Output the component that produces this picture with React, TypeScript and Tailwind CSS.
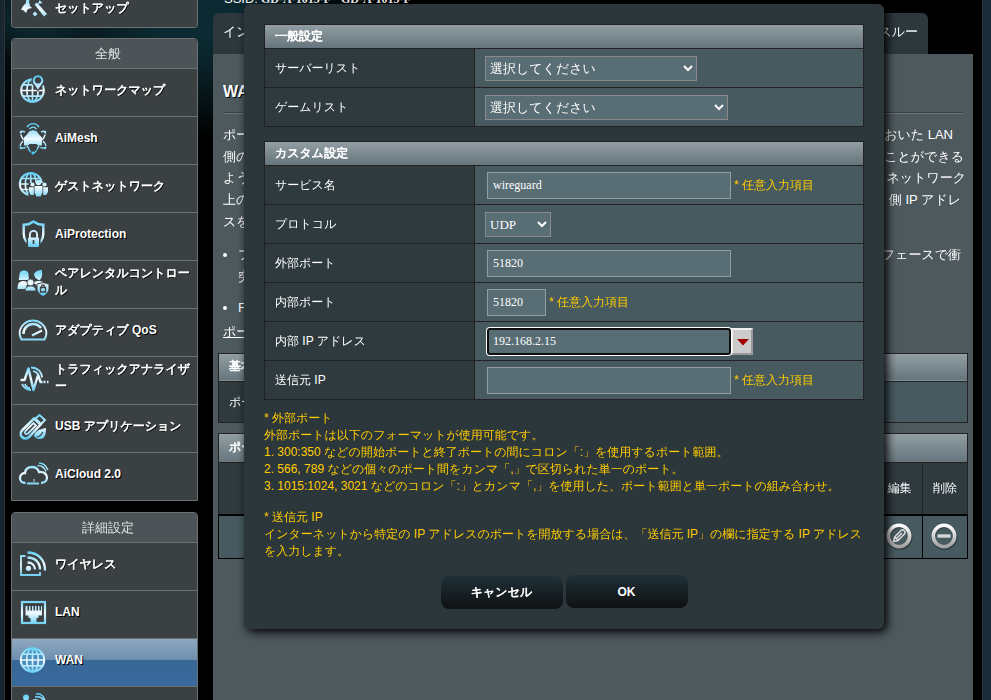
import React from "react";

const sans = "font-['Liberation_Sans','WenQuanYi_Zen_Hei','Noto_Sans_CJK_JP',sans-serif]";
const serif = "font-['Liberation_Serif','WenQuanYi_Zen_Hei','Noto_Sans_CJK_JP',serif]";

const G = "url(#ice)";

function Globe({ cx, cy, r }: { cx: number; cy: number; r: number }) {
  return (
    <g fill="none" stroke={G} strokeWidth="1.7">
      <circle cx={cx} cy={cy} r={r} strokeWidth="2" />
      <ellipse cx={cx} cy={cy} rx={r * 0.5} ry={r} />
      <path d={`M${cx} ${cy - r}V${cy + r + 0.01}h.01M${cx - r} ${cy}H${cx + r}v.01M${cx - r * 0.85} ${cy - r * 0.5}H${cx + r * 0.85}v.01M${cx - r * 0.85} ${cy + r * 0.5}H${cx + r * 0.85}v.01`} />
    </g>
  );
}

const icons: Record<string, React.ReactNode> = {
  setup: (
    <g>
      <path d="M17.500 11.500l2.500-2 10 11.500-3 2.500z" fill={G} />
      <path d="M9 4h4l-1 5 1 4 2 2-4 1-2 4-3-3-2 0 2-4 3-3zM21 11l1.500-4 3 3zM18 18.500l2.500 2.500-2.500 2.500-2.500-2.500z" fill={G} />
    </g>
  ),
  map: (
    <g>
      <Globe cx={15.500} cy={15.500} r={11.300} />
      <path d="M21 17c-2-4-6.500-7-6.500-11a6.500 6.500 0 0 1 13 0c0 4-4.500 7-6.500 11z" fill="#3b4042" />
      <path fillRule="evenodd" d="M21 15c-1.500-4-5.300-6-5.300-9.500a5.300 5.300 0 0 1 10.600 0c0 3.500-3.800 5.500-5.300 9.500zM21 2a3.300 3.300 0 1 0 .01 0z" fill={G} />
    </g>
  ),
  mesh: (
    <g fill="none" stroke={G} strokeWidth="1.400">
      <path d="M7 22.500v-8l3-3 2-3 4-1.500 4 1.500 2 3 3 3v8h-4l-1.500-1.500h-7L11 22.500z" fill={G} stroke="none" />
      <path d="M10 4c3-4.500 9-4.500 12 0M12.500 6c2-2.500 5-2.500 7 0" />
      <path d="M8 9C4 7 3 9 4 12c.5 2 2 4 3 5M24 9c4-2 5 0 4 3-.5 2-2 4-3 5M6 18c-3 3-4 6-2 7 2 .5 5-.5 7-2M26 18c3 3 4 6 2 7-2 .5-5-.5-7-2M11 24c1 4 3 6 5 6s4-2 5-6" strokeDasharray="6 1" />
      <g fill={G} stroke="none"><circle cx="4" cy="9" r="1.300" /><circle cx="28" cy="9" r="1.300" /><circle cx="4" cy="25" r="1.300" /><circle cx="28" cy="25" r="1.300" /><circle cx="16" cy="30" r="1.500" /></g>
    </g>
  ),
  guest: (
    <g>
      <Globe cx={13.800} cy={13} r={11} />
      <path d="M11.500 12h18v14h-18z" fill="#3b4042" />
      <g fill={G}>
        <circle cx="21.500" cy="11.500" r="2.700" /><circle cx="15.500" cy="13.500" r="2.100" /><circle cx="27.500" cy="13.500" r="2.100" />
        <path d="M17.500 15h8v6.500l-2 4h-4l-2-4zM12 16.200h4.800V24h-3L12 21zM26.200 16.200H31V21l-1.800 3h-3z" />
      </g>
    </g>
  ),
  shield: (
    <g>
      <path d="M16.500 2.500c3.500 2.500 6.500 3.300 9.800 3.300V15c0 6-3.800 10-9.800 12.800-6-2.800-9.800-6.800-9.800-12.800V5.800c3.300 0 6.300-.8 9.800-3.300z" fill="none" stroke={G} strokeWidth="2.400" />
      <path d="M9.500 19h14v12h-14z" fill="#3b4042" />
      <path d="M12.900 19v-3.500a3.600 3.600 0 0 1 7.200 0V19" fill="none" stroke={G} strokeWidth="1.800" />
      <rect x="11" y="18.500" width="11" height="9.500" rx="1" fill={G} />
      <path d="M16.500 21v4" stroke="#3b4042" strokeWidth="1.700" />
    </g>
  ),
  parental: (
    <g fill={G}>
      <path d="M1.500 13c1-1 .5-7 2-8.500s5.500-1.500 7 0 1 7.500 2 8.500zM17 7c2-4 7-4 8-4 0 4 1 7-2.500 10.500C19 12 17 10 17 7z" />
      <path d="M.5 22c0-6 2-8 6-8 3 0 4 1.500 4.500 3-2 1-2 3-2 5zM16 16c2-1.500 3-2 6-2 3 0 5 1 5.500 3l-4 1v4h-3c-.5-4-2-5-4.500-6z" />
      <g stroke="#3b4042" strokeWidth=".8">
        <circle cx="13.500" cy="15.500" r="3.500" />
        <path d="M8 24c0-3.500 2-5 5.500-5s5.500 1.500 5.500 5z" />
      </g>
      <path d="M26 15.500l6 1.500v4.500c0 3.500-2.500 6-6 8-3.500-2-6-4.500-6-8V17z" stroke="#3b4042" />
      <path d="M23.500 20.500h5V25h-5zM24.500 20.500v-1a1.500 1.500 0 0 1 3 0v1" fill="none" stroke="#3b4042" strokeWidth="1.300" />
    </g>
  ),
  qos: (
    <g fill="none" stroke={G}>
      <path d="M4.500 24.500C1 18 3 12 7.500 8.500c5-4 12-4 17 0C29 12 31 18 27.500 24.500z" strokeWidth="2" strokeLinejoin="round" />
      <path d="M6.500 19c0-5.500 4-10 9.500-10 4 0 6 1.500 8 4" strokeWidth="2.600" />
      <path d="M15 20.500l10-5" strokeWidth="2" />
    </g>
  ),
  traffic: (
    <g fill="none" stroke={G}>
      <path d="M3.500 17h4l4-11.500 5 21.500 4.500-15 2.500 7h2" strokeWidth="2.400" strokeLinejoin="round" />
      <path d="M14 4.500c7 0 11 5 11 10M16 8c4 1 6 4 6 7M5 21c2 4 5 6 9 6M8 21c1 3 3 4 5 4" strokeWidth="1.800" />
      <path d="M26.500 19h2M30 19h1.500" strokeWidth="2.600" />
    </g>
  ),
  usb: (
    <g fill="none" stroke={G}>
      <path d="M5.500 19L17 7.500l6.500 6L12 26c-2.500 2-5 2-7 0s-1.500-5 .5-7z" strokeWidth="2.500" />
      <path d="M8.500 20l8-8 2.500 2.500-8 8c-2.500 1.500-4-.5-2.500-2.500z" strokeWidth="1.800" />
      <path d="M18.500 7.500L22.500 4l5.500 5-4 4z" strokeWidth="2" />
      <path d="M17 25c1-5 5-6.500 12-8 0 6-1 10.500-5.500 11-3 0-4.500-.5-6.500-3z" fill={G} stroke="none" />
      <path d="M19.500 26c3.500 0 5-2.500 6.500-5" stroke="#3b4042" strokeWidth="1.200" />
    </g>
  ),
  cloud: (
    <g fill="none" stroke={G} strokeWidth="2.300">
      <path d="M8.500 24C4.500 24 3 21.500 3 19c0-2.800 2-5 5-5 .5-4 3.500-6 7-6s6 2 7 5c5-.5 8 2 8 5.500 0 3.300-2.500 5.500-6 5.500" />
      <path d="M10 24.500h12" strokeWidth="2" /><path d="M17 20v3" strokeWidth="1" />
      <path d="M20.500 6.500c4 0 7 2 8.500 6M22 4c4 0 7 2.500 9 7" strokeWidth="1.400" />
    </g>
  ),
  wireless: (
    <g fill="none" stroke={G} strokeWidth="2">
      <path d="M8.500 7H4v19h19v-3" strokeWidth="1.800" />
      <path d="M10.500 3.500C21 3.500 28 10.500 28 21.500M10.500 8.500C18 8.500 23 13.500 23 20.500M10.500 13.500c4.500 0 7.500 3 7.500 7" strokeWidth="2.300" />
      <circle cx="11.500" cy="19.300" r="2.600" fill={G} stroke="none" />
    </g>
  ),
  lan: (
    <g>
      <rect x="5" y="5" width="23" height="21" fill="none" stroke={G} strokeWidth="2.200" />
      <path d="M8.500 9h2v4.500H12V9h1.500v4.500H15V9h1.500v4.500H18V9h1.500v4.500H21V9h1.500v4.500H24V9h1v9.500h-3.500v2.500h-2v4h-6v-4h-2v-2.500h-3z" fill={G} />
    </g>
  ),
  wan: <g><circle cx="15.500" cy="15" r="12" fill="#4b8fc0" /><Globe cx={15.500} cy={15} r={11.700} /></g>,
  alexa: (
    <g fill="none" stroke={G} strokeWidth="1.500">
      <circle cx="9" cy="4.500" r="3" fill={G} stroke="none" />
      <path d="M18 4c5-1 8 1 9 5M19 1c5-1 9 3 9 8M16 7c4-1 6 0 7 3" />
    </g>
  ),
};

function Icon({ name }: { name: string }) {
  return (
    <svg width="32" height="32" viewBox="0 0 32 32" className="shrink-0 overflow-visible">
      {icons[name]}
    </svg>
  );
}

/* Bold text whose kana and kanji are thickened with a stroke, as their font has no bold face. */
function Bold({ text }: { text: string }) {
  return (
    <>
      {text.split(/([\x20-\x7e]+)/).map((part, i) => (
        <span key={i} className={i % 2 ? "" : "[-webkit-text-stroke:0.6px_currentColor]"}>{part}</span>
      ))}
    </>
  );
}

type Item = { icon: string; label: string; active?: boolean };

const general: Item[] = [
  { icon: "map", label: "ネットワークマップ" },
  { icon: "mesh", label: "AiMesh" },
  { icon: "guest", label: "ゲストネットワーク" },
  { icon: "shield", label: "AiProtection" },
  { icon: "parental", label: "ペアレンタルコントロール" },
  { icon: "qos", label: "アダプティブ QoS" },
  { icon: "traffic", label: "トラフィックアナライザー" },
  { icon: "usb", label: "USB アプリケーション" },
  { icon: "cloud", label: "AiCloud 2.0" },
];

const advanced: Item[] = [
  { icon: "wireless", label: "ワイヤレス" },
  { icon: "lan", label: "LAN" },
  { icon: "wan", label: "WAN", active: true },
  { icon: "alexa", label: "" },
];

function MenuItem({ item }: { item: Item }) {
  return (
    <div
      className={`flex h-12 items-start border-t border-[#6b7071] pt-1.5 pl-[5px] ${
        item.active ? "bg-[linear-gradient(#8fa8c0_0%,#6d8fae_44%,#386797_45%,#386a9c_100%)]" : "bg-[#3b4042]"
      }`}
    >
      <Icon name={item.icon} />
      <div className="ml-1.5 flex h-[30px] w-[138px] items-center text-xs leading-[17px] font-bold text-white [text-shadow:1px_1px_0_#000]">
        <p className="break-all"><Bold text={item.label} /></p>
      </div>
    </div>
  );
}

function MenuSection({ title, items }: { title: string; items: Item[] }) {
  return (
    <div className="shrink-0 overflow-hidden rounded-t border border-[#6b7071]">
      <div className="flex h-[29px] items-center justify-center bg-[#4d5457] pl-[7px] text-[13px] text-[#e4e8e9]">{title}</div>
      {items.map((item) => (
        <MenuItem key={item.icon} item={item} />
      ))}
    </div>
  );
}

const field = `border border-[#929ea1] bg-[#596e74] pl-[5px] text-xs text-white outline-none ${serif}`;
const selectStyle = `h-[25px] border border-[#8a8a8a] bg-[#596d74] text-[13px] text-white outline-none ${serif}`;

function Hint() {
  return <span className="ml-[3px] text-xs text-[#fc0]">* 任意入力項目</span>;
}

function FormTable({ title, children }: { title: string; children: React.ReactNode }) {
  return (
    <div className="border border-[#222]">
      <div className="flex h-[23px] items-center bg-linear-to-b from-[#929ea4] to-[#66757c] pb-0.5 pl-2.5 text-xs font-bold text-white">
        <Bold text={title} />
      </div>
      {children}
    </div>
  );
}

function Row({ label, input, children }: { label: string; input?: boolean; children: React.ReactNode }) {
  return (
    <div className="flex h-[39px] border-t border-[#222]">
      <div className="flex w-[210px] shrink-0 items-center border-r border-[#222] bg-[#2f3a3e] pl-2.5 text-xs text-white">{label}</div>
      <div className={`flex grow items-center bg-[#475a5f] ${input ? "pl-3" : "pl-2.5"}`}>{children}</div>
    </div>
  );
}

function Dialog() {
  return (
    <div className="absolute top-1 left-[244px] h-[625px] w-[640px] rounded-md bg-[#2c373b] px-5 pt-5 shadow-[3px_3px_10px_#000]">
      <FormTable title="一般設定">
        <Row label="サーバーリスト">
          <select className={`w-[212px] ${selectStyle}`}><option>選択してください</option></select>
        </Row>
        <Row label="ゲームリスト">
          <select className={`w-[243px] ${selectStyle}`}><option>選択してください</option></select>
        </Row>
      </FormTable>
      <div className="h-3.5" />
      <FormTable title="カスタム設定">
        <Row label="サービス名" input>
          <input className={`h-[27px] w-[244px] ${field}`} defaultValue="wireguard" />
          <Hint />
        </Row>
        <Row label="プロトコル">
          <select className={`w-[66px] ${selectStyle}`}><option>UDP</option></select>
        </Row>
        <Row label="外部ポート" input>
          <input className={`h-[27px] w-[244px] ${field}`} defaultValue="51820" />
        </Row>
        <Row label="内部ポート" input>
          <input className={`h-[27px] w-[59px] ${field}`} defaultValue="51820" />
          <Hint />
        </Row>
        <Row label="内部 IP アドレス" input>
          <input
            className={`z-10 h-[27px] w-[244px] rounded-[3px] border-2 border-[#101010] bg-[#596e74] pl-1 text-xs text-white shadow-[0_0_0_1px_#fff] outline-none ${serif}`}
            defaultValue="192.168.2.15"
          />
          <div className="flex h-[27px] w-[22px] items-center justify-center border-2 border-t-[#eee] border-r-[#999] border-b-[#999] border-l-[#eee] bg-[#ccc]">
            <svg width="12" height="7" viewBox="0 0 12 7" className="mt-0.5 ml-0.5"><path d="M0 0h12L6 6.500z" fill="#a00000" /></svg>
          </div>
        </Row>
        <Row label="送信元 IP" input>
          <input className={`h-[27px] w-[244px] ${field}`} defaultValue="" />
          <Hint />
        </Row>
      </FormTable>
      <div className="mt-2.5 text-xs leading-[17px] whitespace-nowrap text-[#fc0]">
        <p>* 外部ポート</p>
        <p>外部ポートは以下のフォーマットが使用可能です。</p>
        <p>1. 300:350 などの開始ポートと終了ポートの間にコロン「:」を使用するポート範囲。</p>
        <p>2. 566, 789 などの個々のポート間をカンマ「,」で区切られた単一のポート。</p>
        <p>3. 1015:1024, 3021 などのコロン「:」とカンマ「,」を使用した、ポート範囲と単一ポートの組み合わせ。</p>
        <p className="mt-3.5">* 送信元 IP</p>
        <p>インターネットから特定の IP アドレスのポートを開放する場合は、「送信元 IP」の欄に指定する IP アドレス</p>
        <p>を入力します。</p>
      </div>
      <div className="mt-[15px] flex justify-center gap-[3px] text-xs font-bold text-white [text-shadow:1px_1px_0_#000]">
        <button className="mt-px h-[33px] w-[122px] rounded-lg bg-linear-to-b from-[#203038] to-[#0f1112] pb-0.5"><Bold text="キャンセル" /></button>
        <button className="h-[33px] w-[122px] rounded-lg bg-linear-to-b from-[#203038] to-[#0f1112]">OK</button>
      </div>
    </div>
  );
}

const paragraph = [
  ["ポー", "おいた LAN", "pr-[10px]"],
  ["側の", "ことができる", "-mr-px"],
  ["よう", "ネットワーク", "-mr-[3px]"],
  ["上の", "側 IP アドレ", "pr-[2px]"],
  ["スを", "", ""],
];

function RoundButton({ edit }: { edit?: boolean }) {
  return (
    <svg width="28" height="28" viewBox="0 0 28 28">
      <circle cx="14.500" cy="15" r="11" fill="none" stroke="#222c2f" strokeWidth="4" opacity=".6" />
      <circle cx="14" cy="14" r="10.700" fill="none" stroke="url(#silver)" strokeWidth="3.600" />
      {edit ? (
        <path d="M8.500 19.500l1-4.500 6.500-6.500q1.500-1.500 3.200.2t.2 3.200L13 18.500zM10 15l3 3M11.500 16.500l5.500-5.500" fill="none" stroke="#e0e0e0" strokeWidth="1.400" />
      ) : (
        <path d="M7.500 14h13" stroke="#d4d8d9" strokeWidth="3.400" />
      )}
    </svg>
  );
}

function Content() {
  return (
    <main className="flex w-[760px] shrink-0 flex-col text-white">
      <div className="h-[13px] pl-[11px] whitespace-nowrap">
        <div className="-mt-[9px] flex h-4 items-center gap-[3px] text-[13px] leading-4">
          SSID:
          <span className={`flex gap-2.5 text-xs font-bold ${serif}`}><span>GD-A-1015-F</span><span>GD-A-1015-F</span></span>
        </div>
      </div>
      <div className="flex h-[41px] justify-between pr-[45px] text-[13px]">
        <div className="flex w-[100px] items-center rounded-tl-md bg-[#2d383c] pb-[3px] pl-2.5">イン</div>
        <div className="flex w-[100px] items-center justify-end rounded-tr-md bg-[#2d383c] pr-2.5 pb-[3px]">スルー</div>
      </div>
      <div className="grow bg-[#4d595d]">
        <div className="mx-2.5 flex h-[60px] items-end border-b border-[#6b7578] pb-3 text-base leading-[19px] font-bold [text-shadow:1px_1px_0_#000] shadow-[inset_0_-1px_0_#374145]">
          WAN
        </div>
        <div className="mx-2.5 pt-2.5 text-[13px] leading-[22px]">
          {paragraph.map(([left, right, pad]) => (
            <div key={left} className={`flex h-[21.7px] justify-between ${pad}`}><span>{left}</span><span>{right}</span></div>
          ))}
          <div className="mt-[11.5px] flex h-[22px] items-center justify-between pr-[2px]">
            <span className="flex items-center"><i className="mr-[11px] size-1 rounded-full bg-white" />フ</span>
            <span>フェースで衝</span>
          </div>
          <div className="h-[22px] pl-[15px]">突</div>
          <div className="mt-[9px] flex h-[22px] items-center"><i className="mr-[11px] size-1 rounded-full bg-white" />F</div>
          <div className="mt-0.5 h-[22px] underline">ポー</div>
        </div>
        <div className="mx-[5px] mt-2.5 border border-[#222]">
          <div className="flex h-[27px] items-center border-b border-[#829095] bg-linear-to-b from-[#929ea4] to-[#66757c] pb-px pl-2.5 text-xs font-bold"><Bold text="基本" /></div>
          <div className="flex h-[41px] border-t border-[#222] bg-[#475a5f]">
            <div className="flex w-[210px] items-center bg-[#2f3a3e] pl-2.5 text-xs">ポー</div>
          </div>
        </div>
        <div className="mx-[5px] mt-2.5 border border-[#222]">
          <div className="flex h-7 items-center bg-linear-to-b from-[#929ea4] to-[#66757c] pb-0.5 pl-2.5 text-xs font-bold"><Bold text="ポー" /></div>
          <div className="flex h-[52px] justify-end border-t border-[#222] bg-[#2f3a3e] text-xs">
            <div className="flex w-[45px] items-center justify-center pb-px">編集</div>
            <div className="flex w-[45px] items-center justify-center border-l border-[#222] pb-px">削除</div>
          </div>
          <div className="flex h-[44px] justify-end border-t-2 border-t-black bg-[#475a5f] shadow-[1px_1px_0_#000,-1px_1px_0_#000]">
            <div className="flex w-[45px] items-center justify-center pr-0.5 pb-0.5"><RoundButton edit /></div>
            <div className="flex w-[45px] items-center justify-center border-l border-black pr-0.5 pb-0.5"><RoundButton /></div>
          </div>
        </div>
      </div>
    </main>
  );
}

export default function App() {
  return (
    <div className={`relative flex h-[700px] w-[991px] overflow-hidden bg-black ${sans}`}>
      <svg width="0" height="0" className="absolute">
        <defs>
          <linearGradient id="ice" gradientUnits="userSpaceOnUse" x1="0" y1="2" x2="0" y2="30">
            <stop offset="0" stopColor="#5ccdf5" />
            <stop offset=".5" stopColor="#f4fbff" />
            <stop offset="1" stopColor="#45c4f3" />
          </linearGradient>
          <linearGradient id="silver" x1="0" y1="0" x2="0" y2="1">
            <stop offset="0" stopColor="#fff" />
            <stop offset="1" stopColor="#a2a2a2" />
          </linearGradient>
        </defs>
      </svg>
      <div className="w-[5px] shrink-0 border-r border-[#303436] bg-[#182631]" />
      <div className="flex grow bg-[radial-gradient(ellipse_60px_40px_at_30px_20px,#0e3038,transparent),radial-gradient(ellipse_170px_140px_at_190px_0px,#0c2a32_30%,transparent),radial-gradient(ellipse_400px_140px_at_0px_0px,#071317,#000)]">
        <aside className="flex w-[208px] shrink-0 flex-col pr-[15px] pl-1.5">
          <div className="mb-2.5 h-7 shrink-0 overflow-hidden rounded-b border border-t-0 border-[#6b7071]">
            <div className="-mt-[14px]"><MenuItem item={{ icon: "setup", label: "セットアップ" }} /></div>
          </div>
          <MenuSection title="全般" items={general} />
          <div className="h-[11px] shrink-0" />
          <MenuSection title="詳細設定" items={advanced} />
        </aside>
        <Content />
      </div>
      <div className="w-[9px] shrink-0 border-l border-[#303436] bg-[#1a2a37]" />
      <Dialog />
    </div>
  );
}
